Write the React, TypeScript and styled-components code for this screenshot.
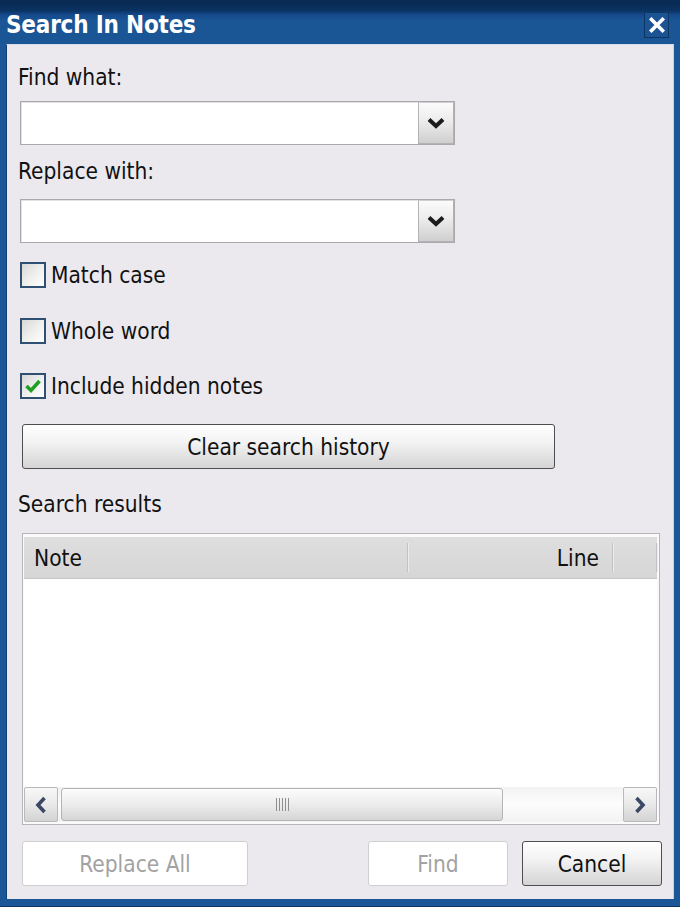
import React from "react";
import styled, { createGlobalStyle } from "styled-components";

const GlobalStyle = createGlobalStyle`
  html, body {
    margin: 0;
    padding: 0;
    background: #1b5697;
  }
  body {
    font-family: "DejaVu Sans Condensed", "DejaVu Sans", sans-serif;
    font-stretch: condensed;
    color: #111;
  }
`;

const Window = styled.div`
  width: 680px;
  height: 907px;
  display: flex;
  flex-direction: column;
  box-sizing: border-box;
  background: #1b5697;
  overflow: hidden;
`;

const TitleBar = styled.div`
  height: 44px;
  flex-shrink: 0;
  display: flex;
  align-items: center;
  justify-content: space-between;
  padding: 5px 11px 0 6px;
  box-sizing: border-box;
  background: linear-gradient(
    to bottom,
    #082a52 0%,
    #0b3261 22%,
    #14498a 32%,
    #1a5596 45%,
    #1a5596 100%
  );
  border-top: 1px solid #0a2d57;
`;

const Title = styled.span`
  color: #fff;
  font-weight: bold;
  font-size: 24px;
  letter-spacing: -0.2px;
`;

const CloseButton = styled.div`
  width: 25px;
  height: 26px;
  box-sizing: border-box;
  border: 1px solid #0d3564;
  background: #1b5393;
  display: flex;
  align-items: center;
  justify-content: center;
`;

const Frame = styled.div`
  flex: 1;
  display: flex;
  padding: 0 6px 7px 6px;
  background: #1b5697;
  border-bottom: 1px solid #0b3263;
`;

const Body = styled.div`
  flex: 1;
  display: flex;
  flex-direction: column;
  align-items: flex-start;
  background: #ebe9ee;
  padding: 20px 11px 0 11px;
  border-top: 1px solid #d3dbe7;
  border-left: 1px solid #0f3e75;
  border-right: 1px solid #c9cfdb;
`;

const Label = styled.div<{ $top: number }>`
  font-size: 22.5px;
  line-height: 24px;
  margin-top: ${(p) => p.$top}px;
`;

const Combo = styled.div<{ $top: number }>`
  margin: ${(p) => p.$top}px 0 0 2px;
  width: 435px;
  height: 44px;
  box-sizing: border-box;
  display: flex;
  background: #fff;
  border: 1px solid #a9a8ad;
  box-shadow: inset 1px 1px 0 #e2e2e4;
`;

const ComboInput = styled.div`
  flex: 1;
`;

const DropButton = styled.div`
  width: 36px;
  box-sizing: border-box;
  border: 1px solid #b3b3b6;
  border-top-color: #cfcfd2;
  background: linear-gradient(to bottom, #fbfbfb 0%, #ececec 45%, #cfcfcf 100%);
  display: flex;
  align-items: center;
  justify-content: center;
`;

const CheckRow = styled.div<{ $top: number }>`
  margin: ${(p) => p.$top}px 0 0 2px;
  display: flex;
  align-items: center;
  gap: 5px;
  font-size: 22.5px;
  line-height: 26px;
`;

const CheckBox = styled.div`
  width: 26px;
  height: 26px;
  box-sizing: border-box;
  border: 2px solid #2f4f73;
  background: linear-gradient(135deg, #d8d8d6 0%, #eeeeec 50%, #ffffff 100%);
  display: flex;
  align-items: center;
  justify-content: center;
`;

const PushButton = styled.button<{ $width: number; $disabled?: boolean }>`
  width: ${(p) => p.$width}px;
  height: 45px;
  box-sizing: border-box;
  border-radius: 3px;
  font-family: inherit;
  font-stretch: condensed;
  font-size: 22.5px;
  padding: 0;
  cursor: default;
  color: ${(p) => (p.$disabled ? "#a2a2a4" : "#111")};
  border: 1px solid ${(p) => (p.$disabled ? "#cfcfd2" : "#4e4e50")};
  background: ${(p) =>
    p.$disabled
      ? "#ffffff"
      : "linear-gradient(to bottom, #ffffff 0%, #f3f3f3 40%, #d4d4d4 100%)"};
`;

const ClearButton = styled(PushButton)`
  margin: 25px 0 0 4px;
`;

const ResultsList = styled.div`
  margin: 17px 0 0 4px;
  width: 638px;
  height: 292px;
  box-sizing: border-box;
  border: 1px solid #b6b6ba;
  background: #fafafa;
  padding: 3px 2px 2px 1px;
  display: flex;
  flex-direction: column;
`;

const Header = styled.div`
  height: 41px;
  flex-shrink: 0;
  display: flex;
  align-items: stretch;
  background: linear-gradient(to bottom, #dedede 0%, #d6d6d6 100%);
  border-bottom: 1px solid #c6c6c8;
  font-size: 22.5px;
`;

const HeaderCell = styled.div<{ $width?: number; $align?: "left" | "right" }>`
  ${(p) => (p.$width ? `width: ${p.$width}px;` : "flex: 1;")}
  display: flex;
  align-items: center;
  justify-content: ${(p) => (p.$align === "right" ? "flex-end" : "flex-start")};
  padding: 0 14px 0 10px;
  box-sizing: border-box;
  position: relative;

  &::after {
    content: "";
    position: absolute;
    right: 0;
    top: 6px;
    bottom: 6px;
    width: 1px;
    background: #c2c2c4;
    box-shadow: 1px 0 0 #ececec;
  }
`;

const RowsArea = styled.div`
  flex: 1;
  background: #fff;
`;

const HScroll = styled.div`
  height: 35px;
  flex-shrink: 0;
  display: flex;
  align-items: stretch;
  background: linear-gradient(to bottom, #f2f2f2 0%, #fdfdfd 50%, #f2f2f2 100%);
`;

const ScrollArrow = styled.div`
  width: 34px;
  box-sizing: border-box;
  border: 1px solid #b9b9bc;
  border-radius: 2px;
  background: linear-gradient(to bottom, #f8f8f8 0%, #e9e9e9 50%, #d3d3d3 100%);
  display: flex;
  align-items: center;
  justify-content: center;
`;

const Track = styled.div`
  flex: 1;
  display: flex;
  padding: 1px 3px;
`;

const Thumb = styled.div`
  width: 442px;
  box-sizing: border-box;
  border: 1px solid #b4b4b7;
  border-radius: 3px;
  background: linear-gradient(to bottom, #fcfcfc 0%, #ececec 50%, #d5d5d5 100%);
  display: flex;
  align-items: center;
  justify-content: center;
`;

const Grip = styled.div`
  display: flex;
  gap: 2px;

  span {
    width: 1px;
    height: 13px;
    background: #8e8e90;
  }
`;

const ButtonRow = styled.div`
  margin: 16px 0 0 4px;
  width: 640px;
  display: flex;
  gap: 14px;
`;

const Spacer = styled.div`
  flex: 1;
`;

const XGlyph = () => (
  <svg width="16" height="16" viewBox="0 0 16 16">
    <path d="M2.5 2.5 L13.5 13.5 M13.5 2.5 L2.5 13.5" stroke="#fff" strokeWidth="3.6" strokeLinecap="square" />
  </svg>
);

const DownChevron = () => (
  <svg width="18" height="12" viewBox="0 0 18 12">
    <path d="M2 2.5 L9 9 L16 2.5" fill="none" stroke="#1b1b1b" strokeWidth="4" />
  </svg>
);

const SideChevron = ({ dir }: { dir: "left" | "right" }) => (
  <svg width="12" height="18" viewBox="0 0 12 18">
    <path
      d={dir === "left" ? "M9.5 2 L3 9 L9.5 16" : "M2.5 2 L9 9 L2.5 16"}
      fill="none"
      stroke="#3a4864"
      strokeWidth="3.6"
    />
  </svg>
);

const Tick = () => (
  <svg width="20" height="20" viewBox="0 0 20 20">
    <path d="M3.5 10 L8 14.5 L16.5 5" fill="none" stroke="#21a026" strokeWidth="3.6" />
  </svg>
);

const options = [
  { label: "Match case", checked: false, top: 19 },
  { label: "Whole word", checked: false, top: 30 },
  { label: "Include hidden notes", checked: true, top: 29 },
];

export default function App() {
  return (
    <>
      <GlobalStyle />
      <Window>
        <TitleBar>
          <Title>Search In Notes</Title>
          <CloseButton>
            <XGlyph />
          </CloseButton>
        </TitleBar>
        <Frame>
          <Body>
            <Label $top={0}>Find what:</Label>
            <Combo $top={12}>
              <ComboInput />
              <DropButton>
                <DownChevron />
              </DropButton>
            </Combo>
            <Label $top={14}>Replace with:</Label>
            <Combo $top={16}>
              <ComboInput />
              <DropButton>
                <DownChevron />
              </DropButton>
            </Combo>
            {options.map((o) => (
              <CheckRow key={o.label} $top={o.top}>
                <CheckBox>{o.checked && <Tick />}</CheckBox>
                {o.label}
              </CheckRow>
            ))}
            <ClearButton $width={533}>Clear search history</ClearButton>
            <Label $top={23}>Search results</Label>
            <ResultsList>
              <Header>
                <HeaderCell $width={384}>Note</HeaderCell>
                <HeaderCell $width={205} $align="right">
                  Line
                </HeaderCell>
                <HeaderCell />
              </Header>
              <RowsArea />
              <HScroll>
                <ScrollArrow>
                  <SideChevron dir="left" />
                </ScrollArrow>
                <Track>
                  <Thumb>
                    <Grip>
                      <span />
                      <span />
                      <span />
                      <span />
                      <span />
                    </Grip>
                  </Thumb>
                </Track>
                <ScrollArrow>
                  <SideChevron dir="right" />
                </ScrollArrow>
              </HScroll>
            </ResultsList>
            <ButtonRow>
              <PushButton $width={226} $disabled>
                Replace All
              </PushButton>
              <Spacer />
              <PushButton $width={140} $disabled>
                Find
              </PushButton>
              <PushButton $width={140}>Cancel</PushButton>
            </ButtonRow>
          </Body>
        </Frame>
      </Window>
    </>
  );
}
